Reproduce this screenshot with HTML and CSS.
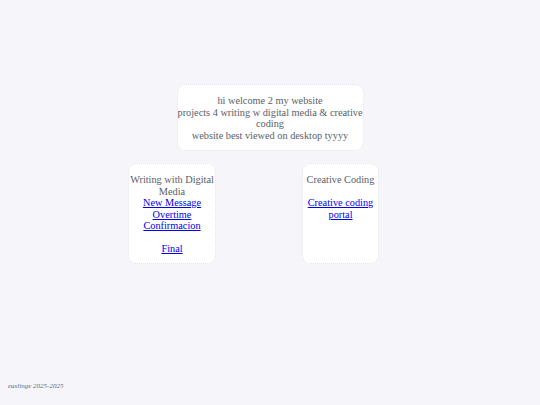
FILE: index.html
```html
<!DOCTYPE html>
<html>
<head>
<meta charset="utf-8">
<link rel="stylesheet" href="styles.css">
</head>
<body>
<main class="page">
  <div class="intro card">
    hi welcome 2 my website<br>
    projects 4 writing w digital media &amp; creative coding<br>
    website best viewed on desktop tyyyy
  </div>
  <div class="row">
    <div class="card box box-left">
      Writing with Digital Media<br>
      <a href="#">New Message</a><br>
      <a href="#">Overtime</a><br>
      <a href="#">Confirmacion</a><br>
      <br>
      <a href="#">Final</a>
    </div>
    <div class="card box box-right">
      Creative Coding<br>
      <br>
      <a href="#">Creative coding portal</a>
    </div>
  </div>
</main>
<footer class="foot">easlinge 2025-2025</footer>
</body>
</html>
```
FILE: styles.css
```css
html, body {
  margin: 0;
  padding: 0;
}
body {
  background: #f5f5fa;
  font-family: "Liberation Serif", "Times New Roman", serif;
  font-size: 10.3px;
  line-height: 11.5px;
  color: #595e69;
  height: 405px;
  box-sizing: border-box;
  padding: 8px 8px 15px;
  display: flex;
  flex-direction: column;
}
.page {
  display: flex;
  flex-direction: column;
  align-items: flex-start;
  padding-top: 76px;
}
.card {
  background: #ffffff;
  border: 1px dotted #dfe1ec;
  border-radius: 9px;
  text-align: center;
  box-sizing: border-box;
}
.intro {
  align-self: center;
  width: 187px;
  height: 67px;
  padding: 10px 0 8px;
}
.row {
  display: flex;
  gap: 86px;
  margin-top: 12px;
  padding-left: 120px;
}
.box {
  height: 101px;
  padding: 10px 0 8px;
}
.box-left {
  width: 88px;
}
.box-right {
  width: 77px;
  padding-left: 2px;
  padding-right: 2px;
}
a {
  color: #0000ee;
}
.foot {
  margin-top: auto;
  font-size: 7px;
  line-height: 8px;
  font-style: italic;
  color: #666a77;
}
```
